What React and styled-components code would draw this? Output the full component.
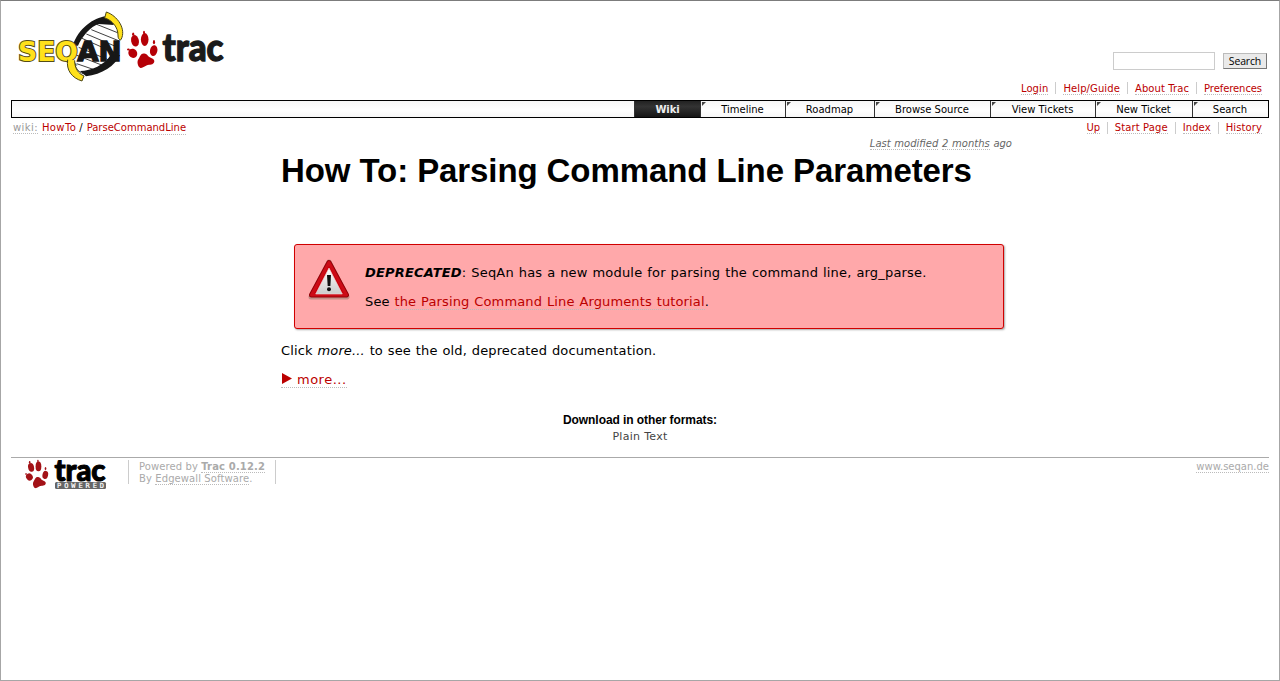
import React from 'react';
import styled, { createGlobalStyle, css } from 'styled-components';

const GlobalStyle = createGlobalStyle`
  *, *::before, *::after { box-sizing: border-box; }
  html, body { margin: 0; padding: 0; }
  body {
    background: #fff;
    color: #000;
    font: 13px/16px Verdana, "DejaVu Sans", sans-serif;
    overflow: hidden;
  }
`;

const Page = styled.div`
  height: 681px;
  border: 1px solid #a6a6a6;
  border-top-color: #7c7c7c;
  padding: 0 10px;
`;

const Header = styled.header`
  height: 80px;
  display: flex;
  justify-content: space-between;
`;

const LogoArea = styled.div`
  padding: 4px 0 0 0;
`;

const SearchForm = styled.form`
  display: flex;
  align-items: flex-start;
  gap: 8px;
  padding: 51px 2px 0 0;
`;

const SearchInput = styled.input`
  width: 102px;
  height: 18px;
  border: 1px solid #ccc;
  padding: 0;
  background: #fff;
`;

const SearchButton = styled.button`
  width: 44px;
  height: 16px;
  margin-top: 1px;
  padding: 0;
  border: 1px solid #bbb;
  border-right-color: #777;
  border-bottom-color: #777;
  background: #eaeaea;
  color: #000;
  font: 10.5px/14px "Open Sans", sans-serif;
  letter-spacing: -0.15px;
`;

const Link = styled.a`
  color: ${p => p.$color || '#b00'};
  text-decoration: none;
  border-bottom: 1px dotted #bbb;
  letter-spacing: ${p => p.$ls === undefined ? 'inherit' : `${p.$ls}px`};
`;

const MetaNav = styled.ul`
  display: flex;
  justify-content: flex-end;
  list-style: none;
  margin: 0;
  padding: ${p => p.$top}px 7px 0 0;
  height: 19px;
  font-size: 10px;
  line-height: ${p => p.$line}px;
`;

const MetaItem = styled.li`
  height: 12px;
  white-space: nowrap;
  ${p => p.$divided && css`
    border-left: 1px solid #ccc;
    margin-left: 7px;
    padding-left: 7px;
  `}
`;

const MainNav = styled.nav`
  display: flex;
  justify-content: flex-end;
  height: 18px;
  width: 1258px;
  border: 1px solid #000;
  background: linear-gradient(#f6f6f6, #fff 60%, #f7f7f7);
  font-size: 10px;
  line-height: 17px;
`;

const Tab = styled.a`
  position: relative;
  width: ${p => p.$width}px;
  border-left: 1px solid #333;
  text-align: center;
  color: #000;
  padding-right: 1px;
  ${p => p.$active ? css`
    color: #eee;
    font-weight: bold;
    letter-spacing: -0.1px;
    padding-right: 0;
    background: linear-gradient(#222, #333 35%, #151515);
  ` : css`
    &::before {
      content: "";
      position: absolute;
      left: 1px;
      top: 1px;
      border-top: 4px solid #444;
      border-right: 4px solid transparent;
    }
  `}
`;

const ContextBar = styled.div`
  display: flex;
  justify-content: space-between;
  height: 19px;
`;

const Breadcrumb = styled.div`
  display: flex;
  align-items: flex-start;
  padding: 4px 0 0 2px;
  font-size: 10px;
  line-height: 12px;
`;

const Root = styled.span`
  margin-right: 4px;
`;

const Separator = styled.span`
  margin: 0 4px 0 3px;
`;

const Content = styled.main`
  width: 731px;
  margin-left: 270px;
`;

const Modified = styled.div`
  height: 13px;
  padding-top: 1px;
  text-align: right;
  font-size: 10px;
  line-height: 12px;
  font-style: italic;
  color: #666;
  word-spacing: 0.5px;
`;

const Title = styled.h1`
  margin: 0;
  height: 94px;
  font: bold 33px/41px "Liberation Sans", Arial, sans-serif;
  letter-spacing: -0.09px;
  white-space: nowrap;
`;

const Notice = styled.section`
  display: flex;
  width: 710px;
  height: 85px;
  margin-left: 13px;
  padding: 13px 12px 0;
  background: #ffa8aa;
  border: 1px solid #d00000;
  border-radius: 3px;
  box-shadow: 1px 1px 2px rgba(0, 0, 0, .35);
`;

const NoticeText = styled.div`
  padding: 7px 0 0 15px;
`;

const Paragraph = styled.p`
  margin: 0 0 13px;
  white-space: nowrap;
  letter-spacing: ${p => p.$ls || 0.13}px;
  word-spacing: 0.6px;
`;

const Below = styled.div`
  padding-top: 14px;
  height: 84px;
`;

const MoreIcon = styled.svg`
  display: inline-block;
  width: 11px;
  height: 11px;
  margin-right: 5px;
`;

const Formats = styled.section`
  height: 44px;
  text-align: center;
  color: #444;
  font-size: 11px;
  line-height: 14px;
  letter-spacing: 0.3px;
`;

const FormatsTitle = styled.h3`
  margin: 0 0 3px;
  color: #000;
  font: bold 12px/14px "Liberation Sans", Arial, sans-serif;
  letter-spacing: -0.08px;
`;

const Footer = styled.footer`
  display: flex;
  width: 1258px;
  border-top: 1px solid #aaa;
  color: #aaa;
  font-size: 10px;
  line-height: 12px;
`;

const Powered = styled.div`
  width: 148px;
  height: 24px;
  margin: 2px auto 0 0;
  padding: 1px 0 0 10px;
  border-left: 1px solid #ccc;
  border-right: 1px solid #ccc;
  white-space: nowrap;
  letter-spacing: 0.1px;
`;

const Site = styled.div`
  padding-top: 3px;
`;

const LogoSvg = styled.svg`
  display: block;
  overflow: visible;
`;

function Paw({ fill }) {
  return (
    <g fill={fill}>
      <ellipse cx="8" cy="9.8" rx="3.9" ry="5.8" transform="rotate(-12 8 9.8)" />
      <ellipse cx="17.7" cy="8.5" rx="3.8" ry="6.4" />
      <ellipse cx="26.7" cy="19.6" rx="3.7" ry="5.4" transform="rotate(12 26.7 19.6)" />
      <ellipse cx="5.8" cy="22.3" rx="4.3" ry="4.8" transform="rotate(-35 5.8 22.3)" />
      <ellipse cx="6.2" cy="3.2" rx="1.1" ry="1.8" />
      <ellipse cx="17" cy="1.4" rx="1" ry="1.7" />
      <ellipse cx="27" cy="11.2" rx="1.1" ry="2.1" />
      <ellipse cx="1.4" cy="18.5" rx="1.4" ry="1" />
      <path d="M17.4 22.5C13.6 21.8 13.2 25.6 11.5 28C9.6 30.7 10.7 35.3 13 36.8C15.4 37.8 17.8 35 20 34.3C22.3 33.5 26.6 34.2 27.3 30.8C27.8 27.4 23.2 27.4 21.6 25.6C20.6 24.4 20 23 17.4 22.5Z" />
    </g>
  );
}

function SiteLogo() {
  return (
    <LogoSvg width="220" height="76" viewBox="11 5 220 76" role="img" aria-label="SeqAn trac">
      <g transform="translate(10 5) scale(.33333)">
        <path d="M290 45C240 50 200 90 192 125C190 165 200 195 226 204C276 192 322 150 326 92C325 65 315 49 290 45Z" fill="#fff" />
        <path d="M260 58L325 84M244 74L328 108M229 87L326 128M216 100L320 146M206 127L308 170M198 150L290 186M200 176L264 198" stroke="#222" strokeWidth="2.6" />
        <path d="M193 170C195 188 204 200 220 206" fill="none" stroke="#333" strokeWidth="3" />
        <path d="M288 34C250 38 206 70 188 122L204 122C216 95 242 64 266 57L312 60C306 48 298 40 288 34Z" fill="#171717" />
        <path d="M210 198C244 197 284 180 302 150L330 150C316 182 276 208 228 214Z" fill="#171717" />
        <path d="M289 21C322 32 350 72 333 104C330 107 323 101 324 90C324 68 308 46 284 39Z" fill="#ffe11b" stroke="#4a4517" strokeWidth="3" />
        <text x="24" y="168" fontFamily="DejaVu Sans" fontWeight="bold" fontSize="79" textLength="180" lengthAdjust="spacingAndGlyphs" fill="#ffe11b" stroke="#554d17" strokeWidth="6" paintOrder="stroke">SEQ</text>
        <path d="M173 164C168 196 186 219 216 228L222 213C204 205 194 190 194 166" fill="#ffe11b" stroke="#4a4517" strokeWidth="3" />
        <text x="202" y="168" fontFamily="DejaVu Sans" fontWeight="bold" fontSize="79" textLength="133" lengthAdjust="spacingAndGlyphs" fill="#171717" stroke="#171717" strokeWidth="4">AN</text>
      </g>
      <g transform="translate(127 31)"><Paw fill="#b50007" /></g>
      <text x="162.5" y="61" fontFamily="Lato" fontWeight="900" fontSize="37.5" textLength="61" lengthAdjust="spacingAndGlyphs" fill="#1b1b1b" stroke="#1b1b1b" strokeWidth="1.3">trac</text>
    </LogoSvg>
  );
}

function PoweredLogo() {
  return (
    <LogoSvg width="117" height="34" viewBox="11 458 117 34" role="img" aria-label="Trac Powered">
      <g transform="translate(25 460) scale(.76)"><Paw fill="#a31217" /></g>
      <text x="54.5" y="480.5" fontFamily="Lato" fontWeight="900" fontSize="29.5" textLength="51" lengthAdjust="spacingAndGlyphs" fill="#000" stroke="#000" strokeWidth="1">trac</text>
      <rect x="55" y="482" width="51" height="7" rx="1.5" fill="#666" />
      <text x="57" y="488" fontFamily="DejaVu Sans Mono" fontSize="7" textLength="47" fill="#fff" stroke="#fff" strokeWidth=".2">POWERED</text>
    </LogoSvg>
  );
}

function WarningIcon() {
  return (
    <svg width="43" height="43" viewBox="307 258 43 43">
      <defs>
        <linearGradient id="panel" x1="0" y1="0" x2="0" y2="1">
          <stop offset="0" stopColor="#fff" /><stop offset="1" stopColor="#ccc" />
        </linearGradient>
      </defs>
      <path d="M329 262L347 297H311Z" fill="#876" stroke="#876" strokeWidth="5" strokeLinejoin="round" opacity=".5" />
      <path d="M329 262.5L346.5 295H311.5Z" fill="#c9000b" stroke="#930008" strokeWidth="5" strokeLinejoin="round" />
      <path d="M329 262.5L346.5 295H311.5Z" fill="#c9000b" stroke="#cc0c17" strokeWidth="3" strokeLinejoin="round" />
      <path d="M329 268L342.3 294H315.7Z" fill="url(#panel)" stroke="#f3dada" strokeWidth=".6" />
      <path d="M327 275H331L330.4 286H327.7Z" fill="#111" />
      <circle cx="329" cy="289.3" r="2" fill="#111" />
    </svg>
  );
}

const metaLinks = [['Login', 0.1], ['Help/Guide', 0.1], ['About Trac', 0.1], ['Preferences', -0.08]];
const pageLinks = [['Up', -0.2], ['Start Page', 0.1], ['Index', 0.1], ['History', 0.1]];
const tabs = [['Wiki', 66], ['Timeline', 85], ['Roadmap', 89], ['Browse Source', 116], ['View Tickets', 105], ['New Ticket', 97], ['Search', 76]];

function LinkList({ items, top, line = 12 }) {
  return (
    <MetaNav $top={top} $line={line}>
      {items.map(([label, ls], i) => (
        <MetaItem key={label} $divided={i > 0}><Link $ls={ls}>{label}</Link></MetaItem>
      ))}
    </MetaNav>
  );
}

export default function App() {
  return (
    <>
      <GlobalStyle />
      <Page>
        <Header>
          <LogoArea><SiteLogo /></LogoArea>
          <SearchForm>
            <SearchInput aria-label="Search" />
            <SearchButton type="button">Search</SearchButton>
          </SearchForm>
        </Header>
        <LinkList items={metaLinks} top={1} line={14} />
        <MainNav>
          {tabs.map(([label, width], i) => (
            <Tab key={label} $width={width} $active={i === 0}>{label}</Tab>
          ))}
        </MainNav>
        <ContextBar>
          <Breadcrumb>
            <Root><Link $color="#999" $ls={0.4}>wiki:</Link></Root>
            <Link $ls={0.4}>HowTo</Link>
            <Separator>/</Separator>
            <Link $ls={0}>ParseCommandLine</Link>
          </Breadcrumb>
          <LinkList items={pageLinks} top={4} />
        </ContextBar>
        <Content>
          <Modified><Link $color="#666">Last modified</Link> <Link $color="#666">2 months</Link> ago</Modified>
          <Title>How To: Parsing Command Line Parameters</Title>
          <Notice>
            <WarningIcon />
            <NoticeText>
              <Paragraph $ls={0.18}><strong><em>DEPRECATED</em></strong>: SeqAn has a new module for parsing the command line, arg_parse.</Paragraph>
              <Paragraph>See <Link>the Parsing Command Line Arguments tutorial</Link>.</Paragraph>
            </NoticeText>
          </Notice>
          <Below>
            <Paragraph>Click <em>more...</em> to see the old, deprecated documentation.</Paragraph>
            <Paragraph $ls={0.5}><Link><MoreIcon viewBox="0 0 11 11"><path d="M1 0L11 5.5L1 11Z" fill="#b00" /></MoreIcon>more...</Link></Paragraph>
          </Below>
        </Content>
        <Formats>
          <FormatsTitle>Download in other formats:</FormatsTitle>
          Plain Text
        </Formats>
        <Footer>
          <PoweredLogo />
          <Powered>Powered by <Link $color="#aaa" $ls={0.15}><strong>Trac 0.12.2</strong></Link><br />By <Link $color="#aaa">Edgewall Software</Link>.</Powered>
          <Site><Link $color="#aaa">www.seqan.de</Link></Site>
        </Footer>
      </Page>
    </>
  );
}
